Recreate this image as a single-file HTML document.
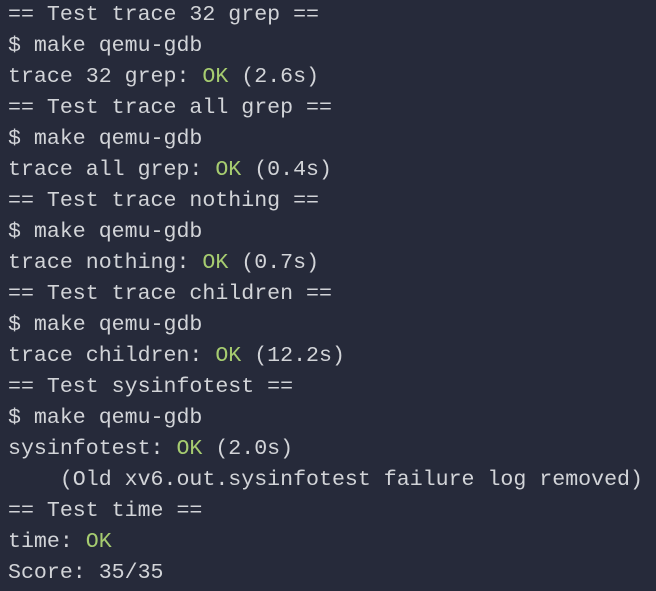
<!DOCTYPE html><html><head><style>
html,body{margin:0;background:#262a3a;width:656px;height:591px;overflow:hidden}
pre{margin:0;padding:0 0 0 8px;position:relative;top:0px;font-family:"Liberation Mono",monospace;font-size:21.6px;line-height:31px;color:#d2d4d8}
.g{color:#a6cc70}
</style></head><body><pre>== Test trace 32 grep ==
$ make qemu-gdb
trace 32 grep: <span class="g">OK</span> (2.6s)
== Test trace all grep ==
$ make qemu-gdb
trace all grep: <span class="g">OK</span> (0.4s)
== Test trace nothing ==
$ make qemu-gdb
trace nothing: <span class="g">OK</span> (0.7s)
== Test trace children ==
$ make qemu-gdb
trace children: <span class="g">OK</span> (12.2s)
== Test sysinfotest ==
$ make qemu-gdb
sysinfotest: <span class="g">OK</span> (2.0s)
    (Old xv6.out.sysinfotest failure log removed)
== Test time ==
time: <span class="g">OK</span>
Score: 35/35</pre></body></html>
